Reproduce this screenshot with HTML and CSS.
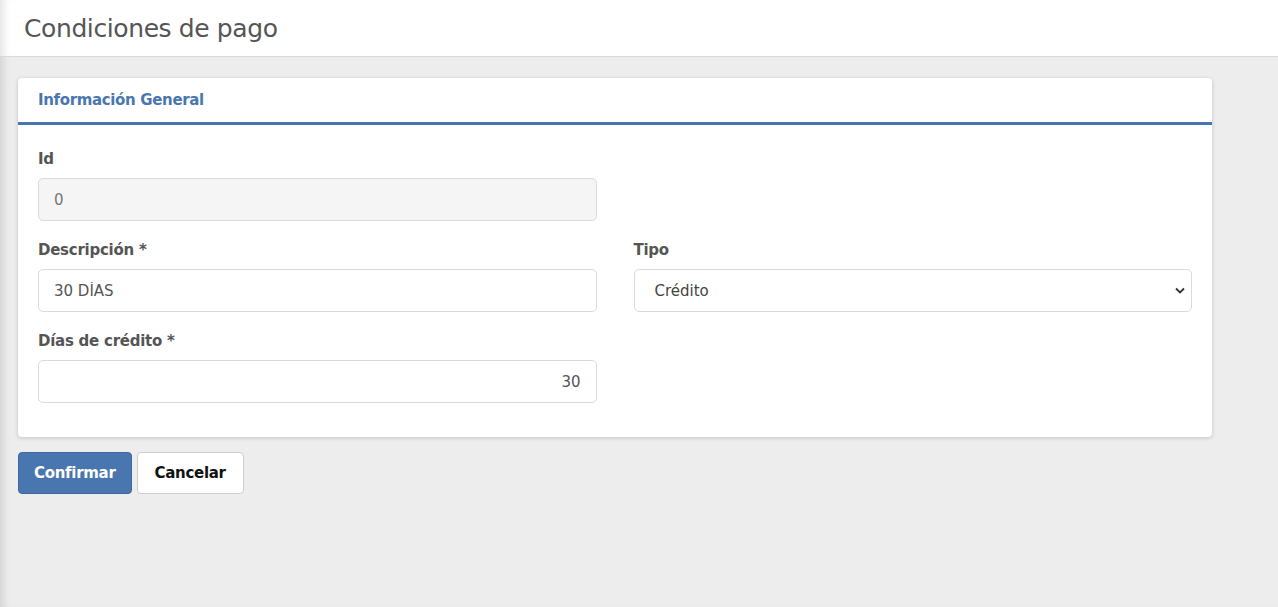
FILE: index.html
```html
<!DOCTYPE html>
<html lang="es">
<head>
    <meta charset="UTF-8">
    <meta name="viewport" content="width=device-width, initial-scale=1.0">
    <title>Condiciones de pago</title>
    <link rel="stylesheet" href="styles.css">
</head>
<body>

<div class="page">
    <div class="page-header">
        <h1 class="page-title">Condiciones de pago</h1>
    </div>

    <div class="content">
        <div class="card">
            <div class="card-header">Información General</div>
            <div class="card-body">
                <div class="form-row">
                    <div class="form-group">
                        <label class="form-label" for="id">Id</label>
                        <input class="form-control" id="id" type="text" value="0" disabled>
                    </div>
                    <div class="form-group"></div>
                </div>
                <div class="form-row">
                    <div class="form-group">
                        <label class="form-label" for="descripcion">Descripción *</label>
                        <input class="form-control" id="descripcion" type="text" value="30 DÍAS">
                    </div>
                    <div class="form-group">
                        <label class="form-label" for="tipo">Tipo</label>
                        <div class="select-wrap">
                            <select class="form-control form-select" id="tipo">
                                <option>Crédito</option>
                                <option>Contado</option>
                            </select>
                            <svg class="select-arrow" width="10" height="7" viewBox="0 0 10 7">
                                <path d="M1 1.5l4 4 4-4" fill="none" stroke="#333" stroke-width="1.8"/>
                            </svg>
                        </div>
                    </div>
                </div>
                <div class="form-row">
                    <div class="form-group">
                        <label class="form-label" for="dias">Días de crédito *</label>
                        <input class="form-control text-right" id="dias" type="text" value="30">
                    </div>
                    <div class="form-group"></div>
                </div>
            </div>
        </div>

        <div class="actions">
            <button class="btn btn-primary">Confirmar</button>
            <button class="btn btn-default">Cancelar</button>
        </div>
    </div>
</div>

</body>
</html>
```

FILE: styles.css
```css
body {
    margin: 0;
    font-family: Tahoma, "DejaVu Sans", "Noto Sans", sans-serif;
    background: #ededed;
    color: #555;
}
.page {
    min-height: 100vh;
    box-shadow: inset 9px 0 8px -6px rgba(0, 0, 0, 0.12);
}
.page-header {
    height: 56px;
    background: #fff;
    border-bottom: 1px solid #d9d9d9;
    box-shadow: inset 9px 0 8px -6px rgba(0, 0, 0, 0.12);
    padding-left: 24px;
    display: flex;
    align-items: center;
}
.page-title {
    margin: 0;
    font-size: 25px;
    font-weight: normal;
    color: #555;
    letter-spacing: -0.4px;
}
.content {
    padding: 21px 66px 20px 18px;
}
.card {
    background: #fff;
    border-radius: 4px;
    box-shadow: 0 1px 4px rgba(0, 0, 0, 0.18);
}
.card-header {
    height: 44px;
    padding: 0 20px;
    display: flex;
    align-items: center;
    font-size: 15px;
    font-weight: bold;
    color: #4a76b0;
    letter-spacing: -0.35px;
    border-bottom: 3px solid #4a76b0;
}
.card-body {
    padding: 25px 20px 34px;
    display: flex;
    flex-direction: column;
    gap: 20px;
}
.form-row {
    display: grid;
    grid-template-columns: 1fr 1fr;
    gap: 37px;
}
.form-label {
    display: block;
    font-size: 15px;
    font-weight: bold;
    color: #555;
    letter-spacing: -0.25px;
    margin-bottom: 10px;
    line-height: 18px;
}
.form-control {
    box-sizing: border-box;
    width: 100%;
    height: 43px;
    padding: 0 15px;
    border: 1px solid #dadada;
    border-radius: 5px;
    background: #fff;
    font-family: inherit;
    font-size: 15px;
    color: #555;
    outline: none;
}
.form-control:disabled {
    background: #f5f5f5;
    color: #777;
}
.text-right {
    text-align: right;
}
.select-wrap {
    position: relative;
}
.form-select {
    appearance: none;
    padding-left: 20px;
    color: #444;
}
.select-arrow {
    position: absolute;
    right: 7px;
    top: 18px;
    pointer-events: none;
}
.actions {
    display: flex;
    gap: 5px;
    margin-top: 15px;
}
.btn {
    height: 42px;
    padding: 0 15px;
    border-radius: 4px;
    font-family: inherit;
    font-size: 15px;
    font-weight: bold;
    letter-spacing: -0.3px;
    cursor: pointer;
}
.btn-primary {
    background: #4a76b0;
    border: 1px solid #3f68a0;
    color: #fff;
}
.btn-default {
    background: #fff;
    border: 1px solid #ccc;
    color: #111;
    padding: 0 17px;
}
```
